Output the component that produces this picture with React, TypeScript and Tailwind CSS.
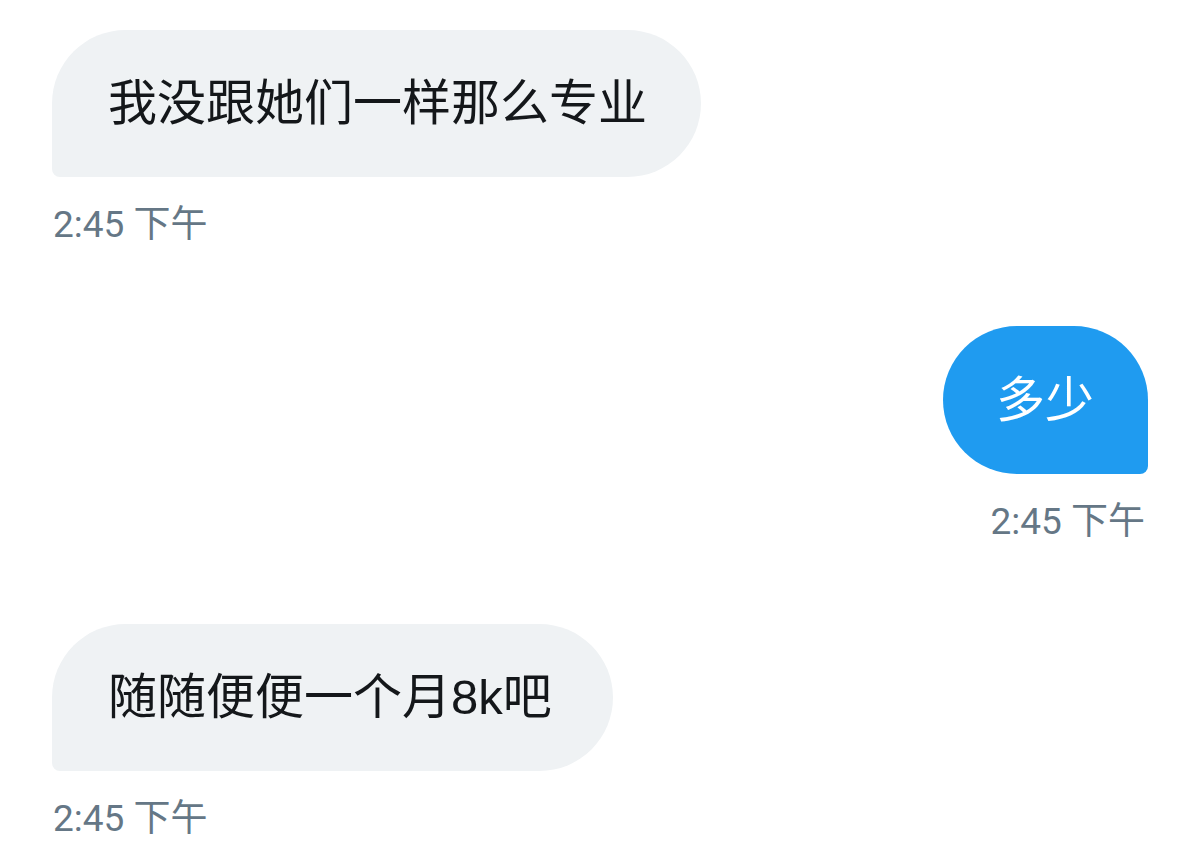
export default function App() {
  return (
    <div className="w-[1200px] h-[855px] bg-white overflow-hidden px-[52px] pt-[30px] flex flex-col font-['Liberation_Sans','Noto_Sans_CJK_SC',sans-serif]">
      <div className="flex flex-col items-start">
        <div className="h-[147px] flex items-center pl-[56px] pr-[54px] bg-[#eff2f4] rounded-[74px] rounded-bl-[8px] text-[49px] text-[#14171a] leading-none">
          我没跟她们一样那么专业
        </div>
        <div className="mt-[26px] pl-[1px] text-[37px] leading-[44px] text-[#657786] font-['Roboto','Noto_Sans_CJK_SC',sans-serif]">
          2:45 下午
        </div>
      </div>

      <div className="mt-[79px] flex flex-col items-end">
        <div className="h-[148px] flex items-center pl-[53px] pr-[54px] bg-[#1f9bf0] rounded-[74px] rounded-br-[8px] text-[49px] text-white leading-none">
          多少
        </div>
        <div className="mt-[26px] pr-[3px] text-[37px] leading-[44px] text-[#657786] font-['Roboto','Noto_Sans_CJK_SC',sans-serif]">
          2:45 下午
        </div>
      </div>

      <div className="mt-[80px] flex flex-col items-start">
        <div className="h-[147px] flex items-center pl-[56px] pr-[61px] bg-[#eff2f4] rounded-[74px] rounded-bl-[8px] text-[49px] text-[#14171a] leading-none">
          随随便便一个月8k吧
        </div>
        <div className="mt-[26px] pl-[1px] text-[37px] leading-[44px] text-[#657786] font-['Roboto','Noto_Sans_CJK_SC',sans-serif]">
          2:45 下午
        </div>
      </div>
    </div>
  );
}
